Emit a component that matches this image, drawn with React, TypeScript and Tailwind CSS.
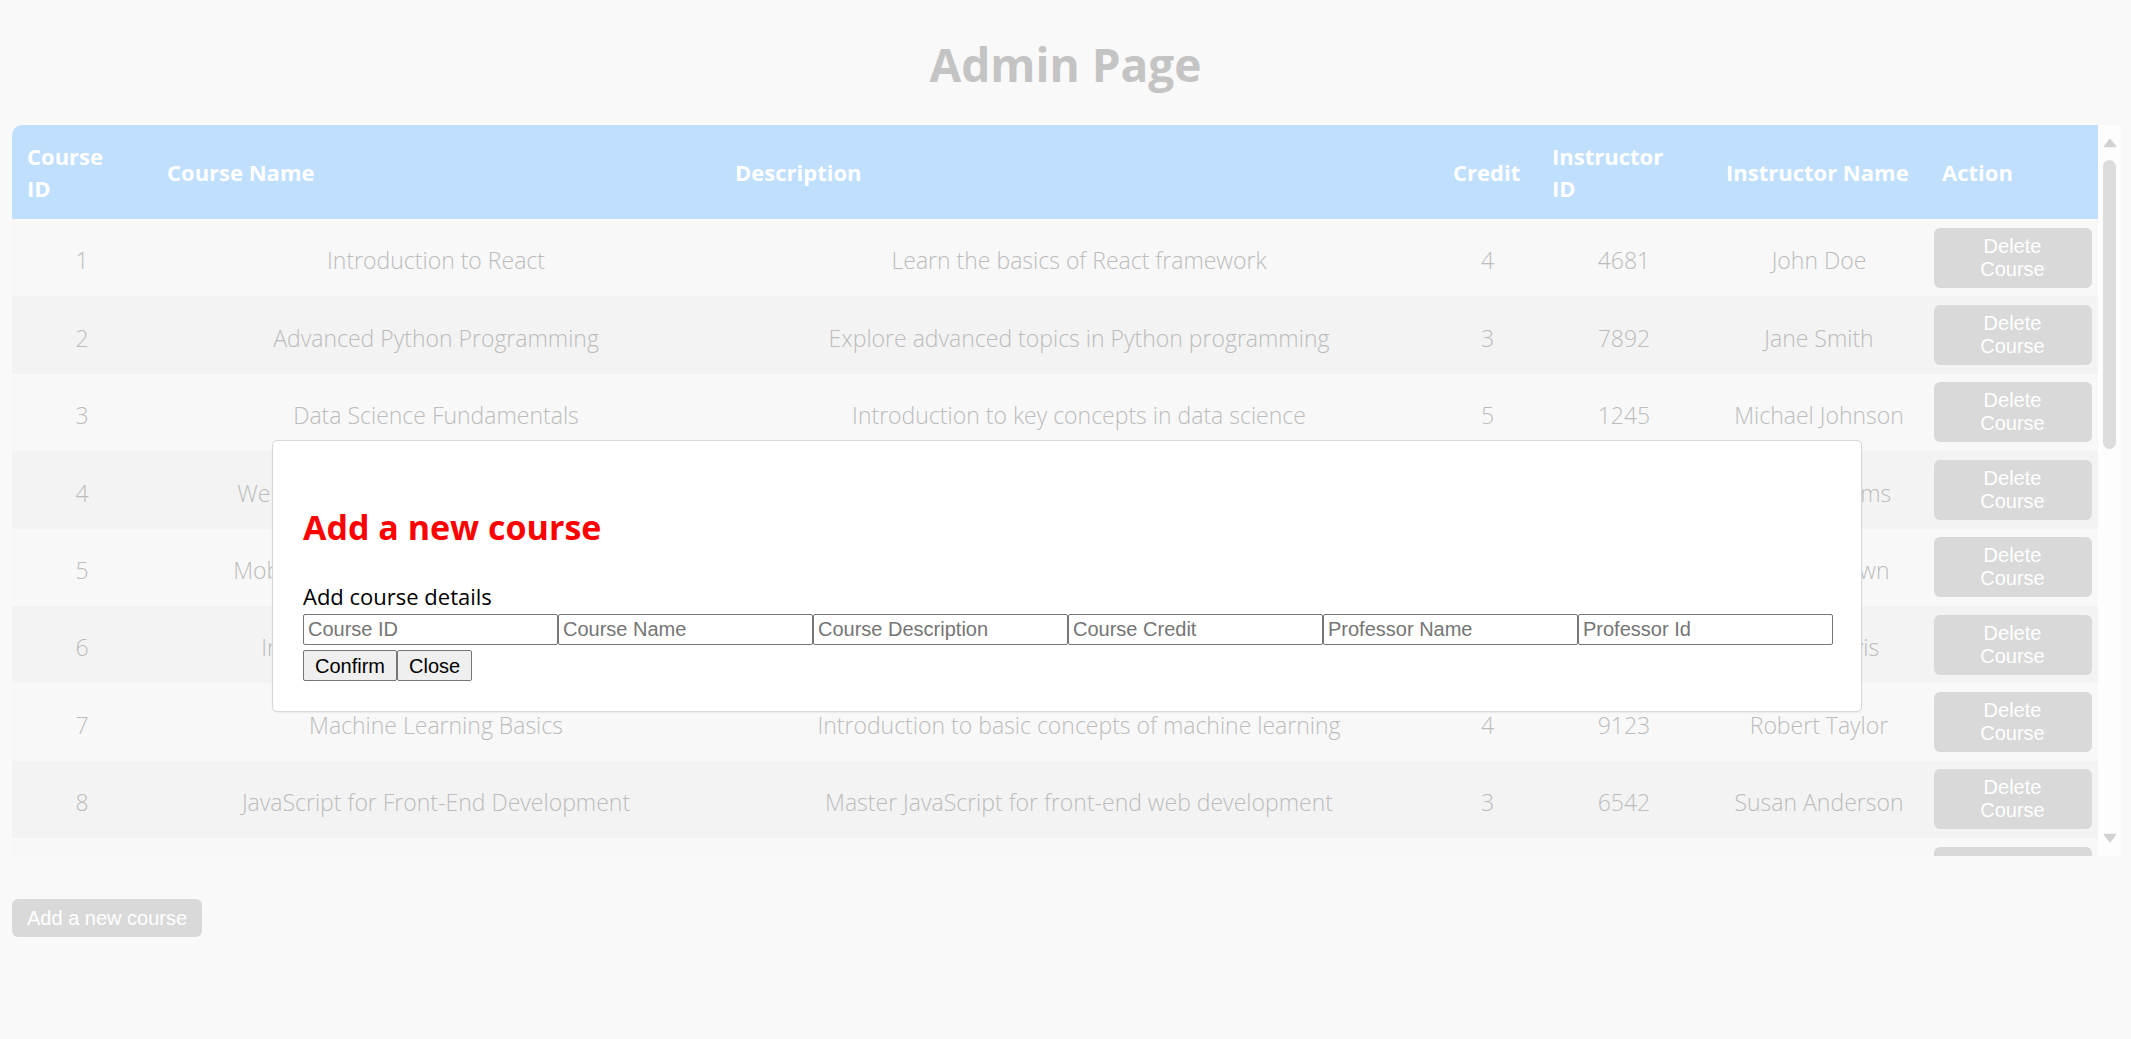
import React from "react";

type Course = {
  id: number;
  name: string;
  desc: string;
  credit: number;
  instructorId: number;
  instructor: string;
};

const courses: Course[] = [
  { id: 1, name: "Introduction to React", desc: "Learn the basics of React framework", credit: 4, instructorId: 4681, instructor: "John Doe" },
  { id: 2, name: "Advanced Python Programming", desc: "Explore advanced topics in Python programming", credit: 3, instructorId: 7892, instructor: "Jane Smith" },
  { id: 3, name: "Data Science Fundamentals", desc: "Introduction to key concepts in data science", credit: 5, instructorId: 1245, instructor: "Michael Johnson" },
  { id: 4, name: "Web Development with HTML and CSS", desc: "Build responsive websites using HTML and CSS", credit: 3, instructorId: 3456, instructor: "Emily Williams" },
  { id: 5, name: "Mobile Application Development Basics", desc: "Create cross-platform mobile applications", credit: 4, instructorId: 5678, instructor: "Jessica Brown" },
  { id: 6, name: "Introduction to Database Systems", desc: "Design and manage relational databases", credit: 3, instructorId: 2345, instructor: "Sarah Davis" },
  { id: 7, name: "Machine Learning Basics", desc: "Introduction to basic concepts of machine learning", credit: 4, instructorId: 9123, instructor: "Robert Taylor" },
  { id: 8, name: "JavaScript for Front-End Development", desc: "Master JavaScript for front-end web development", credit: 3, instructorId: 6542, instructor: "Susan Anderson" },
  { id: 9, name: "Cloud Computing Essentials", desc: "Understand the core concepts of cloud platforms", credit: 4, instructorId: 3187, instructor: "Daniel Wilson" },
  { id: 10, name: "Cybersecurity Fundamentals", desc: "Learn how to protect systems and networks", credit: 3, instructorId: 4829, instructor: "Laura Martinez" },
  { id: 11, name: "Algorithms and Data Structures", desc: "Study essential algorithms and data structures", credit: 5, instructorId: 7364, instructor: "James Anderson" },
  { id: 12, name: "Operating Systems", desc: "Explore processes, memory and file systems", credit: 4, instructorId: 5931, instructor: "Patricia Thomas" },
];

const placeholders = [
  "Course ID",
  "Course Name",
  "Course Description",
  "Course Credit",
  "Professor Name",
  "Professor Id",
];

function UpArrow() {
  return (
    <svg width="14" height="10" viewBox="0 0 14 10" className="block">
      <polygon points="7,1.5 12.5,8.5 1.5,8.5" fill="#d2d2d2" stroke="#d2d2d2" strokeWidth="1.5" strokeLinejoin="round" />
    </svg>
  );
}

function DownArrow() {
  return (
    <svg width="14" height="10" viewBox="0 0 14 10" className="block">
      <polygon points="1.5,1.5 12.5,1.5 7,8.5" fill="#d2d2d2" stroke="#d2d2d2" strokeWidth="1.5" strokeLinejoin="round" />
    </svg>
  );
}

export default function App() {
  return (
    <div className="relative min-h-screen bg-[#f9f9f9] font-['Open_Sans',sans-serif]">
      <h1 className="pt-[33px] text-center text-[46px] leading-[62px] font-bold text-[#c4c4c4]">
        Admin Page
      </h1>

      <div className="mt-[30px] ml-[12px] mr-[10px] flex h-[731px]">
        <div className="min-w-0 flex-1 overflow-hidden rounded-tl-[10px]">
          <table className="w-full table-fixed border-collapse">
            <colgroup>
              <col className="w-[140px]" />
              <col className="w-[568px]" />
              <col className="w-[718px]" />
              <col className="w-[99px]" />
              <col className="w-[174px]" />
              <col className="w-[216px]" />
              <col className="w-[171px]" />
            </colgroup>
            <thead>
              <tr className="h-[94px] bg-[#bfdffd] text-left text-[22px] leading-[32px] font-bold text-white">
                <th className="pl-[15px] pr-[40px] font-bold">Course ID</th>
                <th className="pl-[15px] pr-[4px] font-bold">Course Name</th>
                <th className="pl-[15px] pr-[4px] font-bold">Description</th>
                <th className="pl-[15px] pr-[2px] font-bold">Credit</th>
                <th className="pl-[15px] pr-[40px] font-bold">Instructor ID</th>
                <th className="pl-[15px] pr-[2px] font-bold whitespace-nowrap">Instructor Name</th>
                <th className="pl-[15px] pr-[4px] font-bold">Action</th>
              </tr>
            </thead>
            <tbody className="text-center text-[23px] font-light text-[#bcbcbc]">
              {courses.map((c, i) => (
                <tr key={c.id} className={i % 2 === 0 ? "bg-[#f8f8f8]" : "bg-[#f3f3f3]"}>
                  <td className="h-[77.4px] pt-[6px]">{c.id}</td>
                  <td className="pt-[6px] whitespace-nowrap">{c.name}</td>
                  <td className="pt-[6px] whitespace-nowrap">{c.desc}</td>
                  <td className="pt-[6px]">{c.credit}</td>
                  <td className="pt-[6px]">{c.instructorId}</td>
                  <td className="pt-[6px] whitespace-nowrap">{c.instructor}</td>
                  <td>
                    <button className="mx-auto block h-[60px] w-[158px] rounded-[6px] bg-[#d9d9d9] px-[20px] font-['Liberation_Sans',Arial,sans-serif] text-[20px] leading-[23px] font-normal text-white">
                      Delete Course
                    </button>
                  </td>
                </tr>
              ))}
            </tbody>
          </table>
        </div>

        <div className="flex w-[23px] flex-col items-center bg-[#fdfdfd]">
          <div className="mt-[13px]">
            <UpArrow />
          </div>
          <div className="mt-[12px] h-[289px] w-[13px] rounded-full bg-[#dcdcdc]" />
          <div className="flex-1" />
          <div className="mb-[13px]">
            <DownArrow />
          </div>
        </div>
      </div>

      <button className="ml-[12px] mt-[43px] h-[38px] rounded-[6px] bg-[#d9d9d9] px-[15px] font-['Liberation_Sans',Arial,sans-serif] text-[20px] text-white">
        Add a new course
      </button>

      <div className="absolute left-[272px] top-[440px] w-[1590px] rounded-[5px] border border-[#d6d6d6] bg-white px-[30px] pt-[63px] pb-[30px] shadow-[0_1px_2px_rgba(0,0,0,0.06)]">
        <h2 className="text-[34px] leading-[46px] font-bold text-[#ff0000]">Add a new course</h2>
        <p className="mt-[31px] text-[22px] leading-[30px] text-black">Add course details</p>
        <div className="mt-[3px] flex">
          {placeholders.map((p) => (
            <input
              key={p}
              placeholder={p}
              className="h-[31px] w-[255px] rounded-[2px] border border-[#767676] bg-white px-[4px] font-['Liberation_Sans',Arial,sans-serif] text-[20px] text-black placeholder:text-[#757575] outline-none"
            />
          ))}
        </div>
        <div className="mt-[5px] flex">
          <button className="h-[31px] rounded-[2px] border border-[#767676] bg-[#efefef] px-[11px] font-['Liberation_Sans',Arial,sans-serif] text-[20px] text-black">
            Confirm
          </button>
          <button className="h-[31px] rounded-[2px] border border-[#767676] bg-[#efefef] px-[11px] font-['Liberation_Sans',Arial,sans-serif] text-[20px] text-black">
            Close
          </button>
        </div>
      </div>
    </div>
  );
}
